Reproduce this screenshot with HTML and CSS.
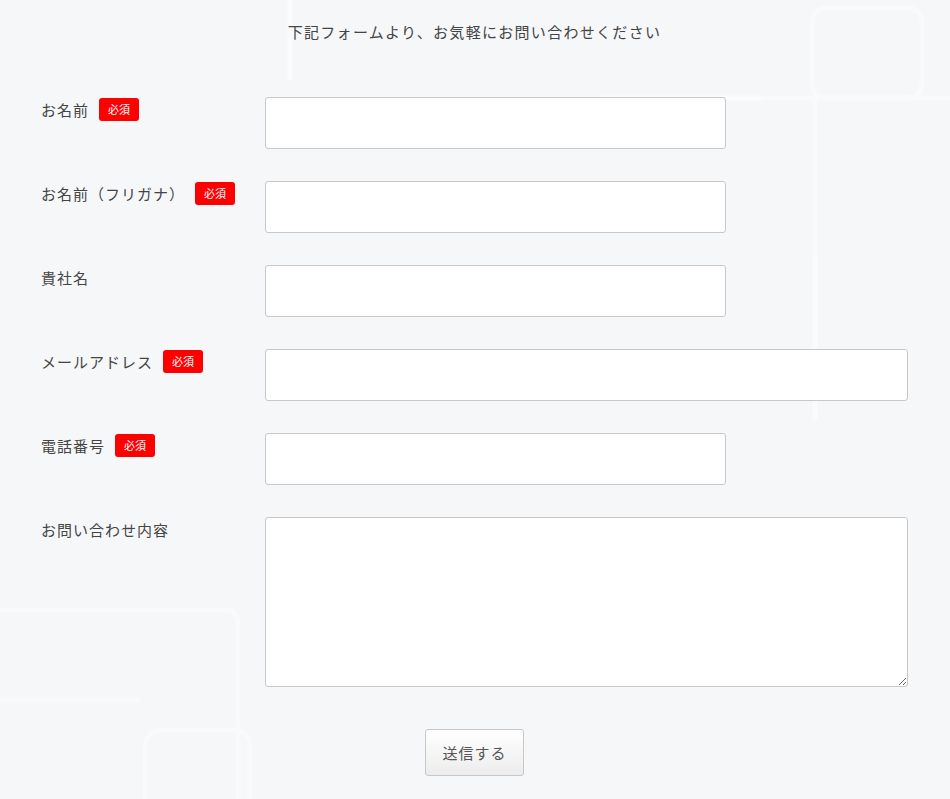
FILE: index.html
```html
<!DOCTYPE html>
<html lang="ja">
<head>
    <meta charset="UTF-8">
    <meta name="viewport" content="width=device-width, initial-scale=1.0">
    <title>お問い合わせ</title>
    <link rel="stylesheet" href="styles.css">
</head>
<body>
    <!-- faint background pattern -->
    <svg class="bg-lines" width="950" height="799" viewBox="0 0 950 799" aria-hidden="true">
        <g fill="none" stroke="#ffffff" stroke-width="5" opacity="0.45">
            <rect x="812" y="8" width="110" height="90" rx="14"/>
            <path d="M600 98 H950"/>
            <path d="M815 98 V420"/>
            <path d="M0 610 H225 Q238 610 238 625 V799"/>
            <rect x="145" y="730" width="105" height="90" rx="16"/>
            <path d="M0 700 H140"/>
            <path d="M290 0 V80"/>
        </g>
    </svg>

    <div class="contact">
        <p class="lead">下記フォームより、お気軽にお問い合わせください</p>

        <form class="contact-form">
            <div class="form-row">
                <label for="name">お名前<span class="required">必須</span></label>
                <input type="text" id="name" class="field">
            </div>
            <div class="form-row">
                <label for="kana">お名前（フリガナ）<span class="required">必須</span></label>
                <input type="text" id="kana" class="field">
            </div>
            <div class="form-row">
                <label for="company">貴社名</label>
                <input type="text" id="company" class="field">
            </div>
            <div class="form-row">
                <label for="email">メールアドレス<span class="required">必須</span></label>
                <input type="email" id="email" class="field wide">
            </div>
            <div class="form-row">
                <label for="tel">電話番号<span class="required">必須</span></label>
                <input type="tel" id="tel" class="field">
            </div>
            <div class="form-row">
                <label for="message">お問い合わせ内容</label>
                <textarea id="message" class="field wide message"></textarea>
            </div>

            <div class="submit-row">
                <button type="button" class="submit-btn">送信する</button>
            </div>
        </form>
    </div>
</body>
</html>
```

FILE: styles.css
```css
body {
    margin: 0;
    background-color: #f6f7f9;
    font-family: "Noto Sans CJK JP", "Noto Sans", sans-serif;
    color: #444;
    overflow: hidden;
}

.bg-lines {
    position: absolute;
    top: 0;
    left: 0;
    z-index: 0;
}

.contact {
    position: relative;
    z-index: 1;
    padding: 20px 42px 0 41px;
}

.lead {
    margin: 0 0 53px;
    text-align: center;
    font-size: 15px;
    letter-spacing: 1.3px;
    line-height: 24px;
}

.form-row {
    display: flex;
    align-items: flex-start;
    margin-bottom: 32px;
}

.form-row label {
    width: 224px;
    flex-shrink: 0;
    display: flex;
    align-items: center;
    padding-top: 1px;
    font-size: 15px;
    letter-spacing: 1px;
    line-height: 23px;
}

.required {
    display: inline-block;
    margin-left: 10px;
    padding: 0 9px;
    background-color: #ff0000;
    color: #fff;
    border-radius: 3px;
    font-size: 11px;
    letter-spacing: 0;
    line-height: 23px;
    height: 23px;
}

.field {
    box-sizing: border-box;
    width: 461px;
    height: 52px;
    margin: 0;
    padding: 8px 10px;
    background: #fff;
    border: 1px solid #c8c8c8;
    border-radius: 3px;
    font-family: inherit;
    font-size: 15px;
}

.field.wide {
    width: 644px;
}

.field.message {
    height: 170px;
}

.submit-row {
    text-align: center;
    margin-top: 42px;
}

.submit-btn {
    width: 99px;
    height: 47px;
    border: 1px solid #c8c8c8;
    border-radius: 3px;
    background: linear-gradient(#ffffff, #ececec);
    color: #555;
    font-family: inherit;
    font-size: 15px;
    letter-spacing: 1px;
    cursor: pointer;
}
```
